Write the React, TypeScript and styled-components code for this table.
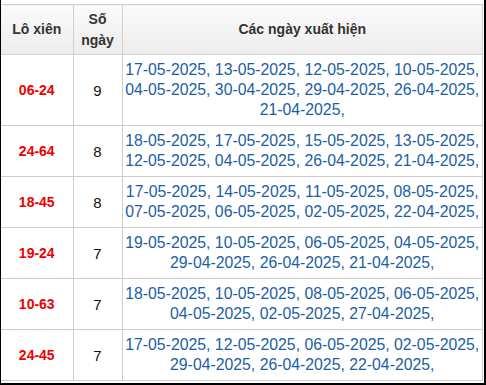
import React from 'react';
import styled, { createGlobalStyle } from 'styled-components';

const GlobalStyle = createGlobalStyle`
  html, body {
    margin: 0;
    padding: 0;
    background: #fff;
  }
  body {
    font-family: "Liberation Sans", Arial, Helvetica, sans-serif;
  }
`;

const Frame = styled.div`
  width: 483px;
  height: 379px;
  padding-top: 4px;
  border-left: 1px solid #000;
  border-right: 2px solid #000;
  border-bottom: 2px solid #000;
  overflow: hidden;
  background: #fff;
`;

const Table = styled.table`
  width: 482px;
  border-collapse: collapse;
  table-layout: fixed;
`;

const Col = styled.col<{ $w?: number }>`
  width: ${p => (p.$w ? `${p.$w}px` : 'auto')};
`;

const HeadCell = styled.th`
  height: 49px;
  padding: 0;
  border: 1px solid #d0d0d0;
  border-left-color: #e2e2e2;
  background: linear-gradient(to bottom, #fafafa 0%, #ececec 100%);
  color: #333;
  font-size: 14px;
  font-weight: bold;
  line-height: 21px;
  text-align: center;
  vertical-align: middle;
  &:first-child {
    border-left: none;
  }
`;

const Row = styled.tr<{ $h: number }>`
  height: ${p => p.$h}px;
`;

const Cell = styled.td`
  border: 1px solid #cccccc;
  text-align: center;
  vertical-align: middle;
  padding: 0;
  &:first-child {
    border-left: none;
  }
`;

const PairCell = styled(Cell)`
  color: #ee0000;
  font-weight: bold;
  font-size: 14px;
`;

const CountCell = styled(Cell)`
  color: #111;
  font-size: 15px;
`;

const DatesCell = styled(Cell)`
  color: #1b5ea6;
  font-size: 15.8px;
  line-height: 20px;
  padding: 5px 0;
`;

const DateItem = styled.span`
  white-space: nowrap;
`;

const rows = [
  {
    pair: '06-24',
    count: 9,
    dates: ['17-05-2025', '13-05-2025', '12-05-2025', '10-05-2025', '04-05-2025', '30-04-2025', '29-04-2025', '26-04-2025', '21-04-2025'],
  },
  {
    pair: '24-64',
    count: 8,
    dates: ['18-05-2025', '17-05-2025', '15-05-2025', '13-05-2025', '12-05-2025', '04-05-2025', '26-04-2025', '21-04-2025'],
  },
  {
    pair: '18-45',
    count: 8,
    dates: ['17-05-2025', '14-05-2025', '11-05-2025', '08-05-2025', '07-05-2025', '06-05-2025', '02-05-2025', '22-04-2025'],
  },
  {
    pair: '19-24',
    count: 7,
    dates: ['19-05-2025', '10-05-2025', '06-05-2025', '04-05-2025', '29-04-2025', '26-04-2025', '21-04-2025'],
  },
  {
    pair: '10-63',
    count: 7,
    dates: ['18-05-2025', '10-05-2025', '08-05-2025', '06-05-2025', '04-05-2025', '02-05-2025', '27-04-2025'],
  },
  {
    pair: '24-45',
    count: 7,
    dates: ['17-05-2025', '12-05-2025', '06-05-2025', '02-05-2025', '29-04-2025', '26-04-2025', '22-04-2025'],
  },
];

const App: React.FC = () => {
  return (
    <>
      <GlobalStyle />
      <Frame>
        <Table>
          <colgroup>
            <Col $w={72} />
            <Col $w={49} />
            <Col />
          </colgroup>
          <thead>
            <tr>
              <HeadCell>Lô xiên</HeadCell>
              <HeadCell>Số<br />ngày</HeadCell>
              <HeadCell>Các ngày xuất hiện</HeadCell>
            </tr>
          </thead>
          <tbody>
            {rows.map(r => (
              <Row key={r.pair} $h={r.dates.length > 8 ? 71 : 51}>
                <PairCell>{r.pair}</PairCell>
                <CountCell>{r.count}</CountCell>
                <DatesCell>
                  {r.dates.map(d => (
                    <React.Fragment key={d}>
                      <DateItem>{d},</DateItem>{' '}
                    </React.Fragment>
                  ))}
                </DatesCell>
              </Row>
            ))}
          </tbody>
        </Table>
      </Frame>
    </>
  );
};

export default App;
